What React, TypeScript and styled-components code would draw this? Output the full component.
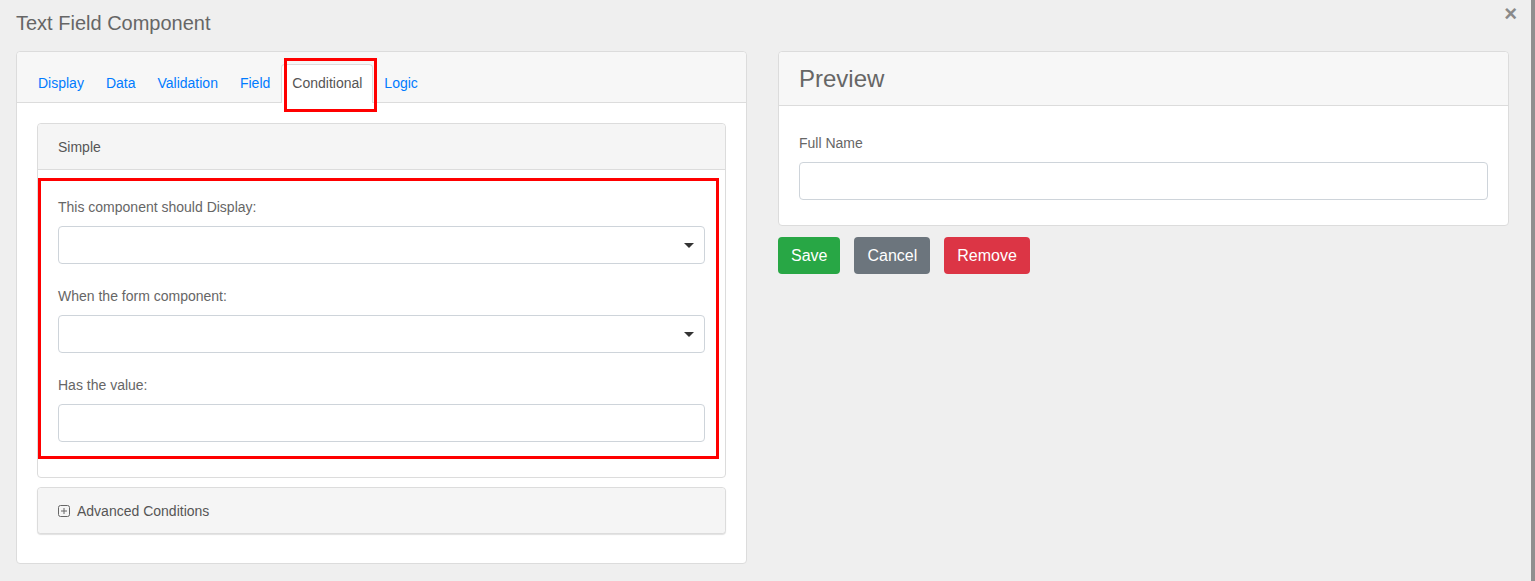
import React from "react";
import styled, { createGlobalStyle } from "styled-components";

const Global = createGlobalStyle`
  html, body { margin: 0; padding: 0; height: 100%; }
  body {
    font-family: "Liberation Sans", Arial, Helvetica, sans-serif;
    font-size: 14px;
    color: #555;
    background: #8f8f8f;
    overflow: hidden;
  }
  #root { height: 100%; }
`;

const Screen = styled.div`
  display: flex;
  height: 581px;
`;

const Modal = styled.div`
  position: relative;
  width: 1531px;
  flex: none;
  background: #efefef;
  padding: 11px 22px 0 16px;
  box-sizing: border-box;
`;

const Backdrop = styled.div`
  flex: 1;
  background: #8f8f8f;
`;

const Title = styled.h4`
  margin: 0 0 16px;
  font-size: 20px;
  line-height: 24px;
  font-weight: 400;
  color: #666;
`;

const Close = styled.button`
  position: absolute;
  top: 2px;
  right: 14px;
  border: none;
  background: none;
  padding: 0;
  font-family: "Liberation Sans", Arial, sans-serif;
  font-size: 22px;
  font-weight: 700;
  line-height: 24px;
  color: #8a8a8a;
  cursor: pointer;
`;

const Columns = styled.div`
  display: grid;
  grid-template-columns: 731px 731px;
  column-gap: 31px;
  align-items: start;
`;

const Card = styled.div`
  background: #fff;
  border: 1px solid #dcdcdc;
  border-radius: 4px;
  box-sizing: border-box;
`;

const TabHeader = styled.div`
  background: #f7f7f7;
  border-bottom: 1px solid #dcdcdc;
  border-radius: 4px 4px 0 0;
  padding: 12px 10px 0;
  display: flex;
`;

const Tab = styled.div<{ $active?: boolean }>`
  position: relative;
  height: 39px;
  line-height: 37px;
  padding: 0 10px;
  box-sizing: border-box;
  margin-bottom: -1px;
  border: 1px solid ${(p) => (p.$active ? "#dcdcdc" : "transparent")};
  border-bottom: none;
  border-radius: 4px 4px 0 0;
  background: ${(p) => (p.$active ? "#fff" : "transparent")};
  color: ${(p) => (p.$active ? "#555" : "#007bff")};
  font-size: 14px;
`;

const Highlight = styled.div<{ $t: number; $l: number; $r: number; $b: number }>`
  position: absolute;
  top: ${(p) => p.$t}px;
  left: ${(p) => p.$l}px;
  right: ${(p) => p.$r}px;
  bottom: ${(p) => p.$b}px;
  border: 3px solid #f00;
  pointer-events: none;
`;

const CardBody = styled.div`
  padding: 20px 20px 29px;
`;

const Panel = styled.div<{ $shadow?: boolean }>`
  border: 1px solid #dcdcdc;
  border-radius: 4px;
  background: #fff;
  box-shadow: ${(p) => (p.$shadow ? "0 1px 1px rgba(0,0,0,0.12)" : "none")};
  & + & {
    margin-top: 9px;
  }
`;

const PanelHeader = styled.div<{ $only?: boolean }>`
  background: #f5f5f5;
  height: 45px;
  display: flex;
  align-items: center;
  gap: 7px;
  padding: 0 20px;
  border-bottom: ${(p) => (p.$only ? "none" : "1px solid #dcdcdc")};
  border-radius: ${(p) => (p.$only ? "4px" : "4px 4px 0 0")};
  color: #555;
  font-size: 14px;
`;

const PanelBody = styled.div`
  position: relative;
  padding: 27px 20px 35px;
`;

const Group = styled.div`
  margin-bottom: 22px;
  &:last-child {
    margin-bottom: 0;
  }
`;

const Label = styled.label`
  display: block;
  font-size: 14px;
  line-height: 21px;
  color: #666;
  margin-bottom: 8px;
`;

const Field = styled.div`
  position: relative;
  height: 38px;
  border: 1px solid #ced4da;
  border-radius: 4px;
  background: #fff;
  box-sizing: border-box;
`;

const Caret = styled.span`
  position: absolute;
  right: 10px;
  top: 50%;
  margin-top: -2px;
  width: 0;
  height: 0;
  border-left: 5px solid transparent;
  border-right: 5px solid transparent;
  border-top: 5px solid #333;
`;

const PreviewHeader = styled.div`
  background: #f7f7f7;
  border-bottom: 1px solid #dcdcdc;
  border-radius: 4px 4px 0 0;
  height: 53px;
  display: flex;
  align-items: center;
  padding: 0 20px;
  font-size: 24px;
  color: #666;
`;

const PreviewBody = styled.div`
  padding: 27px 20px 25px;
`;

const Buttons = styled.div`
  display: flex;
  gap: 14px;
  margin-top: 11px;
`;

const Btn = styled.button<{ $bg: string }>`
  height: 37px;
  padding: 0 13px;
  border: none;
  border-radius: 4px;
  background: ${(p) => p.$bg};
  color: #fff;
  font-family: "Liberation Sans", Arial, sans-serif;
  font-size: 16px;
  cursor: pointer;
`;

const PlusIcon = () => (
  <svg width="12" height="12" viewBox="0 0 12 12" fill="none">
    <rect x="0.5" y="0.5" width="11" height="11" rx="2" stroke="#666" />
    <path d="M6 3v6M3 6h6" stroke="#666" />
  </svg>
);

const tabs = ["Display", "Data", "Validation", "Field", "Conditional", "Logic"];

export default function App() {
  return (
    <>
      <Global />
      <Screen>
        <Modal>
          <Title>Text Field Component</Title>
          <Close aria-label="close">×</Close>
          <Columns>
            <Card>
              <TabHeader>
                {tabs.map((t) => (
                  <Tab key={t} $active={t === "Conditional"}>
                    {t}
                    {t === "Conditional" && <Highlight $t={-7} $l={2} $r={-5} $b={-9} />}
                  </Tab>
                ))}
              </TabHeader>
              <CardBody>
                <Panel>
                  <PanelHeader>Simple</PanelHeader>
                  <PanelBody>
                    <Highlight $t={8} $l={0} $r={6} $b={18} />
                    <Group>
                      <Label>This component should Display:</Label>
                      <Field>
                        <Caret />
                      </Field>
                    </Group>
                    <Group>
                      <Label>When the form component:</Label>
                      <Field>
                        <Caret />
                      </Field>
                    </Group>
                    <Group>
                      <Label>Has the value:</Label>
                      <Field />
                    </Group>
                  </PanelBody>
                </Panel>
                <Panel $shadow>
                  <PanelHeader $only>
                    <PlusIcon />
                    Advanced Conditions
                  </PanelHeader>
                </Panel>
              </CardBody>
            </Card>
            <div>
              <Card>
                <PreviewHeader>Preview</PreviewHeader>
                <PreviewBody>
                  <Label>Full Name</Label>
                  <Field />
                </PreviewBody>
              </Card>
              <Buttons>
                <Btn $bg="#28a745">Save</Btn>
                <Btn $bg="#6c757d">Cancel</Btn>
                <Btn $bg="#dc3545">Remove</Btn>
              </Buttons>
            </div>
          </Columns>
        </Modal>
        <Backdrop />
      </Screen>
    </>
  );
}
